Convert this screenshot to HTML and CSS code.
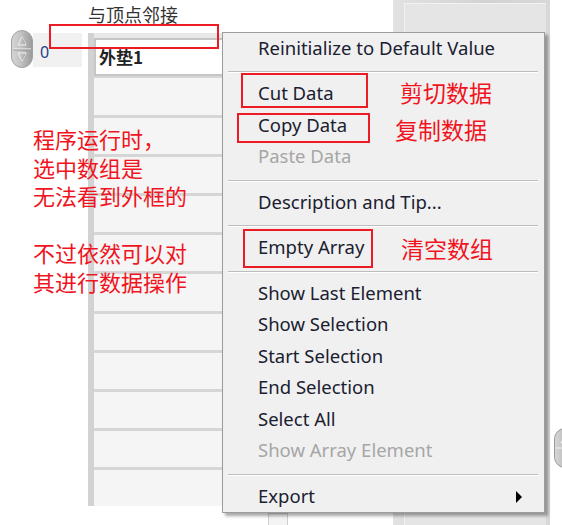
FILE: index.html
```html
<!DOCTYPE html>
<html>
<head>
<meta charset="utf-8">
<link rel="stylesheet" href="styles.css">
</head>
<body>
<div class="stage">
  <div class="panel"><div class="panel-in"></div></div>
  <div class="knob-right">
    <svg width="22" height="40" viewBox="0 0 22 40"><defs><linearGradient id="g2" x1="0" x2="1" y1="0" y2="0"><stop offset="0" stop-color="#d8d8d8"/><stop offset="0.5" stop-color="#bdbdbd"/><stop offset="1" stop-color="#9c9c9c"/></linearGradient></defs><rect x="0.5" y="0.5" width="21" height="39" rx="10.5" fill="url(#g2)" stroke="#9a9a9a"/><line x1="2" y1="20" x2="20" y2="20" stroke="#f2f2f2"/><path d="M11 7 L15 15 L7 15 Z" fill="none" stroke="#f4f4f4"/></svg>
  </div>

  <div class="label">与顶点邻接</div>

  <div class="array-ctl">
    <div class="index">
      <svg class="spin" width="22" height="38" viewBox="0 0 22 38"><defs><linearGradient id="g1" x1="0" x2="1" y1="0" y2="0"><stop offset="0" stop-color="#d6d6d6"/><stop offset="0.45" stop-color="#c2c2c2"/><stop offset="1" stop-color="#9a9a9a"/></linearGradient></defs><rect x="0.5" y="0.5" width="21" height="37" rx="10.5" fill="url(#g1)" stroke="#a2a2a2"/><line x1="2" y1="19" x2="20" y2="19" stroke="#efefef" stroke-width="1.2"/><line x1="2" y1="20" x2="20" y2="20" stroke="#8e8e8e" stroke-width="0.8"/><path d="M11 7 L15 15 L7 15 Z" fill="none" stroke="#f0f0f0" stroke-width="1"/><path d="M11 31 L15 23 L7 23 Z" fill="none" stroke="#f0f0f0" stroke-width="1"/><path d="M11 8 L14 14" stroke="#8a8a8a" stroke-width="0.6"/><path d="M11 30 L14 24" stroke="#8a8a8a" stroke-width="0.6"/></svg>
      <div class="idx-field">0</div>
    </div>
    <div class="column">
      <div class="col-top"></div>
      <div class="cell first">外垫1</div>
      <div class="cell"></div>
      <div class="cell"></div>
      <div class="cell"></div>
      <div class="cell"></div>
      <div class="cell"></div>
      <div class="cell"></div>
      <div class="cell"></div>
      <div class="cell"></div>
      <div class="cell"></div>
      <div class="cell"></div>
      <div class="cell"></div>
    </div>
  </div>
  <div class="scroll-bit"></div>

  <div class="note-left">程序运行时，<br>选中数组是<br>无法看到外框的<br><br>不过依然可以对<br>其进行数据操作</div>

  <div class="menu">
    <div class="item">Reinitialize to Default Value</div>
    <div class="sep"></div>
    <div class="item">Cut Data</div>
    <div class="item">Copy Data</div>
    <div class="item disabled">Paste Data</div>
    <div class="sep"></div>
    <div class="item">Description and Tip...</div>
    <div class="sep"></div>
    <div class="item">Empty Array</div>
    <div class="sep"></div>
    <div class="item">Show Last Element</div>
    <div class="item">Show Selection</div>
    <div class="item">Start Selection</div>
    <div class="item">End Selection</div>
    <div class="item">Select All</div>
    <div class="item disabled">Show Array Element</div>
    <div class="sep"></div>
    <div class="item sub">Export<span class="arrow"></span></div>
  </div>

  <div class="redbox box-top"></div>
  <div class="redbox box-cut"></div>
  <div class="redbox box-copy"></div>
  <div class="redbox box-empty"></div>

  <div class="note note-cut">剪切数据</div>
  <div class="note note-copy">复制数据</div>
  <div class="note note-empty">清空数组</div>
</div>
</body>
</html>
```

FILE: styles.css
```css
html, body {
  margin: 0;
  padding: 0;
  background: #ffffff;
}
body {
  width: 562px;
  height: 525px;
  overflow: hidden;
}
.stage {
  position: relative;
  width: 562px;
  height: 525px;
  overflow: hidden;
  font-family: "Noto Sans", "Noto Sans CJK SC", sans-serif;
}

/* right gray panel behind the menu */
.panel {
  position: absolute;
  left: 393px;
  top: 0;
  width: 157px;
  height: 525px;
  background: linear-gradient(to right, #e2e2e2, #d2d2d2 60%, #d8d8d8);
  display: flex;
  padding: 3px 4px 0 11px;
  box-sizing: border-box;
}
.panel-in {
  flex: 1;
  background: #e5e5e5;
  box-shadow: inset 1px 1px 0 #f2f2f2;
}
.knob-right {
  position: absolute;
  left: 554px;
  top: 428px;
  width: 22px;
  height: 40px;
}

.label {
  position: absolute;
  left: 88px;
  top: 4px;
  font-family: "Noto Sans CJK SC", sans-serif;
  font-size: 18px;
  line-height: 21px;
  color: #333333;
}

.array-ctl {
  position: absolute;
  left: 11px;
  top: 30px;
  display: flex;
  align-items: flex-start;
}
.index {
  display: flex;
  align-items: flex-start;
}
.spin {
  display: block;
}
.idx-field {
  margin-top: 3px;
  width: 49px;
  height: 34px;
  background: #f1f1f1;
  box-sizing: border-box;
  padding: 9px 0 0 7px;
  font-family: "Noto Sans", sans-serif;
  font-size: 16px;
  line-height: 20px;
  color: #1d3f86;
}
.column {
  margin-left: 6px;
  margin-top: 3px;
  width: 140px;
  border-left: 6px solid #d2d2d2;
  background: #e6e6e6;
  box-shadow: inset 1px 0 0 #e8e8e8;
}
.col-top {
  height: 5px;
  background: #e8e8e8;
}
.cell {
  height: 36.1px;
  border-top: 3px solid #d6d6d6;
  background: #f5f5f5;
}
.cell.first {
  height: 38px;
  border: 2px solid #c6c6c6;
  border-right: none;
  box-sizing: border-box;
  background: #ffffff;
  padding: 6px 0 0 3px;
  font-family: "Noto Sans CJK SC", sans-serif;
  font-weight: bold;
  font-size: 17px;
  line-height: 22px;
  color: #222222;
}
.cell.first + .cell {
  border-top-width: 2px;
  height: 37.1px;
}
.scroll-bit {
  position: absolute;
  left: 268px;
  top: 513px;
  width: 20px;
  height: 14px;
  border: 1px solid #cfcfcf;
  background: #f4f4f4;
  box-sizing: border-box;
}

.note-left {
  position: absolute;
  left: 33px;
  top: 124px;
  font-family: "Noto Sans CJK SC", sans-serif;
  font-size: 22px;
  line-height: 28.6px;
  color: #f0141e;
}

.menu {
  position: absolute;
  left: 222px;
  top: 32px;
  width: 323px;
  height: 481px;
  box-sizing: border-box;
  border: 1px solid #9c9c9c;
  background: #f0f0f0;
  box-shadow: 3px 3px 3px rgba(0, 0, 0, 0.35);
  display: flex;
  flex-direction: column;
  font-family: "Noto Sans", sans-serif;
  font-size: 18.5px;
  color: #1a2030;
}
.item {
  height: 31.5px;
  flex: none;
  box-sizing: border-box;
  display: flex;
  align-items: center;
  padding: 0 22px 3px 35px;
  white-space: nowrap;
}
.item.disabled {
  color: #a6a6a6;
}
.item.sub {
  justify-content: space-between;
}
.arrow {
  width: 0;
  height: 0;
  margin-top: 3px;
  border-left: 6px solid #000000;
  border-top: 6px solid transparent;
  border-bottom: 6px solid transparent;
}
.sep {
  height: 14px;
  flex: none;
  display: flex;
  align-items: center;
  padding: 0 6px 0 5px;
}
.sep::after {
  content: "";
  flex: 1;
  height: 1px;
  background: #bdbdbd;
  box-shadow: 0 1px 0 #ffffff;
}

.redbox {
  position: absolute;
  border: 2px solid #ed1c24;
  box-sizing: border-box;
}
.box-top { left: 49px; top: 24px; width: 170px; height: 25px; }
.box-cut { left: 241px; top: 73px; width: 127px; height: 35px; }
.box-copy { left: 237px; top: 113px; width: 133px; height: 30px; }
.box-empty { left: 243px; top: 229px; width: 130px; height: 39px; }

.note {
  position: absolute;
  font-family: "Noto Sans CJK SC", sans-serif;
  font-size: 23px;
  line-height: 28px;
  color: #f0141e;
  white-space: nowrap;
}
.note-cut { left: 400px; top: 78px; }
.note-copy { left: 395px; top: 115px; }
.note-empty { left: 401px; top: 234px; }
```
